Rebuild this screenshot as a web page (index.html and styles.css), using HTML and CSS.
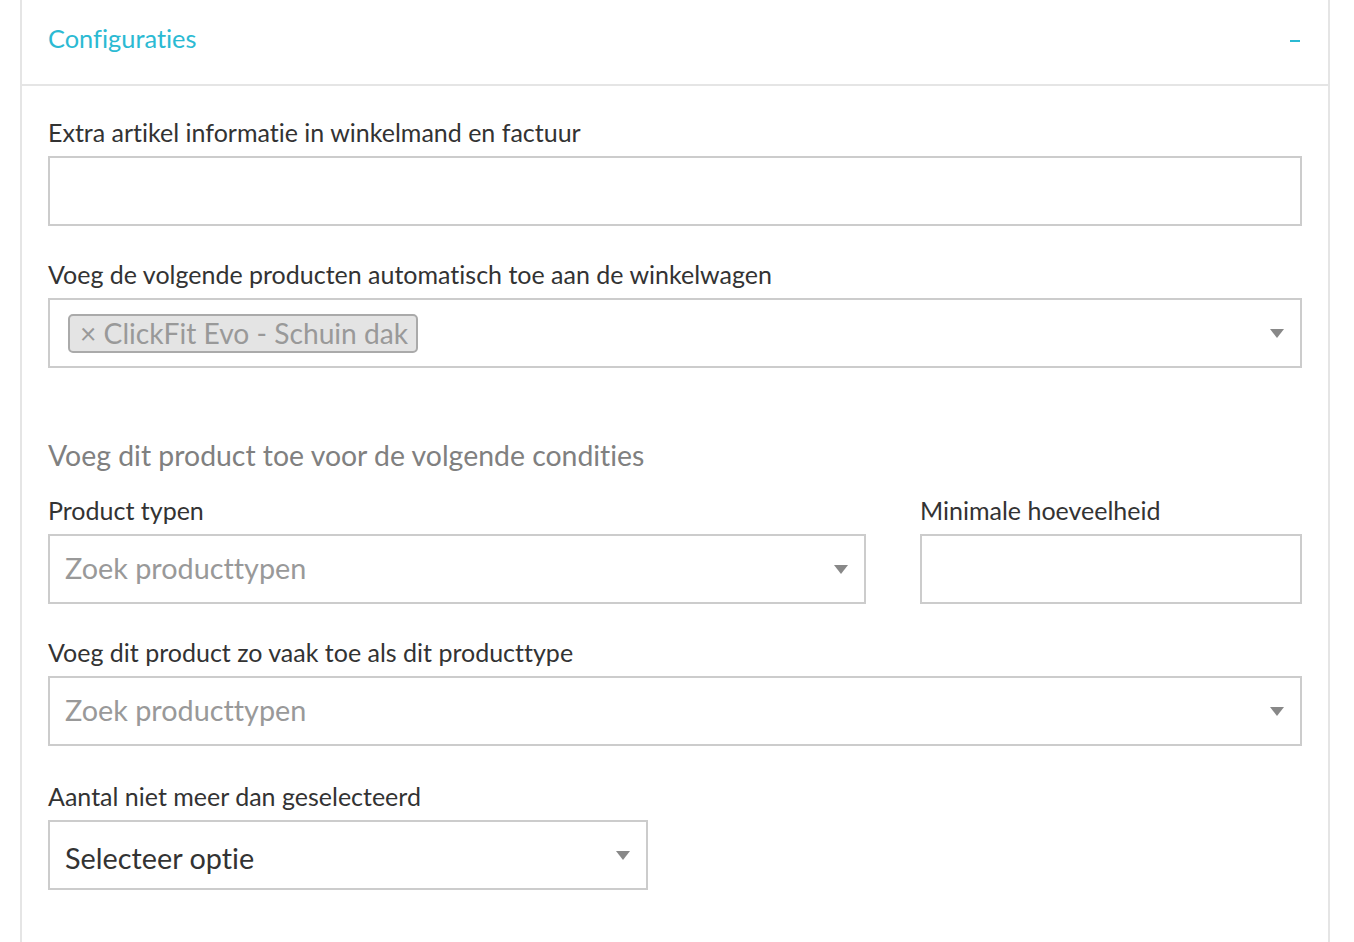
FILE: index.html
```html
<!DOCTYPE html>
<html lang="nl">
<head>
	<meta charset="UTF-8">
	<title>Configuraties</title>
	<link rel="stylesheet" href="styles.css">
</head>
<body>
	<div class="panel">
		<div class="panel-head">
			<span class="panel-title">Configuraties</span>
			<span class="toggle"></span>
		</div>
		<div class="panel-body">
			<div class="field">
				<label class="label">Extra artikel informatie in winkelmand en factuur</label>
				<div class="input"></div>
			</div>
			<div class="field">
				<label class="label">Voeg de volgende producten automatisch toe aan de winkelwagen</label>
				<div class="input select">
					<span class="tag"><span class="tag-x">×</span> ClickFit Evo - Schuin dak</span>
					<span class="caret"></span>
				</div>
			</div>

			<h3 class="section">Voeg dit product toe voor de volgende condities</h3>

			<div class="row">
				<div class="field">
					<label class="label">Product typen</label>
					<div class="input select">
						<span class="placeholder">Zoek producttypen</span>
						<span class="caret"></span>
					</div>
				</div>
				<div class="field">
					<label class="label">Minimale hoeveelheid</label>
					<div class="input"></div>
				</div>
			</div>
			<div class="field wide-gap">
				<label class="label">Voeg dit product zo vaak toe als dit producttype</label>
				<div class="input select">
					<span class="placeholder">Zoek producttypen</span>
					<span class="caret"></span>
				</div>
			</div>
			<div class="field">
				<label class="label">Aantal niet meer dan geselecteerd</label>
				<div class="input select small">
					<span class="value">Selecteer optie</span>
					<span class="caret"></span>
				</div>
			</div>
		</div>
	</div>
</body>
</html>
```

FILE: styles.css
```css
*{
	margin: 0;
	padding: 0;
	box-sizing: border-box;
}
html,body{
	height: 100%;
	background: #fff;
}
body{
	font-family: Lato, "Open Sans", sans-serif;
	font-variant-ligatures: no-common-ligatures;
	color: #333;
	padding: 0 24px 0 20px;
}
.panel{
	min-height: 100%;
	border-left: 2px solid #e5e5e5;
	border-right: 2px solid #e5e5e5;
}
.panel-head{
	height: 86px;
	border-bottom: 2px solid #e5e5e5;
	display: flex;
	align-items: center;
	justify-content: space-between;
	padding: 0 28px 8px 26px;
}
.panel-title{
	font-size: 25.4px;
	color: #2bbad3;
}
.toggle{
	width: 10px;
	height: 2px;
	background: #2bbad3;
	margin-top: 6px;
}
.panel-body{
	padding: 32px 26px 40px 26px;
}
.field{
	margin-bottom: 34px;
}
.wide-gap{
	margin-bottom: 36px;
}
.label{
	display: block;
	font-size: 25px;
	line-height: 29px;
	margin-bottom: 9px;
}
.input{
	height: 70px;
	border: 2px solid #ccc;
	background: #fff;
	display: flex;
	align-items: center;
	padding: 0 16px 0 15px;
}
.select{
	justify-content: space-between;
}
.small{
	width: 600px;
}
.tag{
	background: #e4e4e4;
	border: 2px solid #aaa;
	border-radius: 5px;
	color: #999;
	font-size: 28.2px;
	line-height: 35px;
	padding: 0 8px 0 10px;
	margin-left: 3px;
	margin-top: 1px;
}
.placeholder{
	font-size: 28.8px;
	color: #999;
	margin-top: -2px;
}
.value{
	font-size: 28.8px;
	color: #333;
	margin-top: 6px;
}
.caret{
	width: 0;
	height: 0;
	border-left: 7px solid transparent;
	border-right: 7px solid transparent;
	border-top: 9px solid #888;
	margin-right: 0;
}
.section{
	font-weight: normal;
	font-size: 28.4px;
	line-height: 40px;
	color: #808080;
	margin-top: 67px;
	margin-bottom: 21px;
}
.row{
	display: grid;
	grid-template-columns: 818fr 382fr;
	column-gap: 54px;
}
.row .field{
	margin-bottom: 34px;
}
```
